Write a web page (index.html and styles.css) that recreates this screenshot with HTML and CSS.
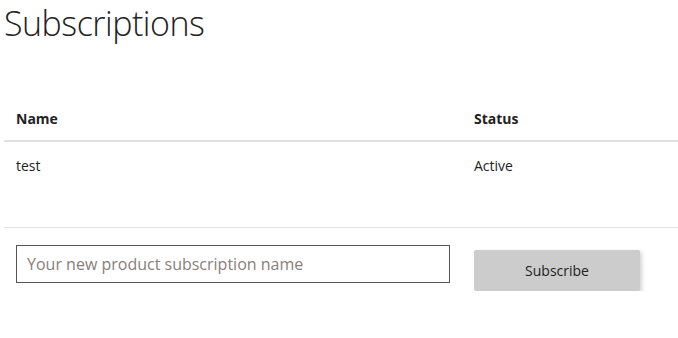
FILE: index.html
```html
<!DOCTYPE html>
<html lang="en">
<head>
    <meta charset="UTF-8">
    <meta name="viewport" content="width=device-width, initial-scale=1.0">
    <title>Subscriptions</title>
    <link rel="stylesheet" href="styles.css">
</head>
<body>
    <h1 class="page-title">Subscriptions</h1>

    <table class="sub-table">
        <thead>
            <tr>
                <th class="col-name">Name</th>
                <th>Status</th>
            </tr>
        </thead>
        <tbody>
            <tr>
                <td>test</td>
                <td>Active</td>
            </tr>
        </tbody>
    </table>

    <form class="sub-form">
        <input type="text" class="sub-input" placeholder="Your new product subscription name">
        <button type="submit" class="sub-button">Subscribe</button>
    </form>
</body>
</html>
```

FILE: styles.css
```css
body {
    font-family: "Open Sans", Arial, sans-serif;
    margin: 0;
    padding: 0 0 0 4px;
    background: #fff;
    color: #222;
}

.page-title {
    font-weight: 300;
    font-size: 34px;
    line-height: 46px;
    letter-spacing: -0.5px;
    margin: 0;
    color: #222;
}

.sub-table {
    width: 100%;
    border-collapse: collapse;
    margin-top: 47px;
    font-size: 14px;
}

.sub-table th {
    text-align: left;
    font-weight: bold;
    line-height: 20px;
    padding: 16px 12px 11px;
    border-bottom: 2px solid #dde0e4;
}

.sub-table .col-name {
    width: 434px;
}

.sub-table td {
    line-height: 20px;
    padding: 14px 12px 51px;
    border-bottom: 1px solid #e3e3e3;
}

.sub-form {
    display: flex;
    align-items: flex-start;
    gap: 24px;
    padding: 17px 12px 0;
}

.sub-input {
    width: 434px;
    height: 38px;
    box-sizing: border-box;
    border: 1px solid #555;
    padding: 0 10px;
    font-family: "Open Sans", Arial, sans-serif;
    font-size: 16px;
    color: #222;
}

.sub-input::placeholder {
    color: #8a8078;
}

.sub-button {
    margin-top: 5px;
    width: 166px;
    height: 41px;
    background: #ccc;
    border: none;
    border-radius: 2px;
    box-shadow: 2px 2px 4px rgba(0,0,0,0.18);
    font-family: "Open Sans", Arial, sans-serif;
    font-size: 14px;
    color: #222;
    cursor: pointer;
}
```
